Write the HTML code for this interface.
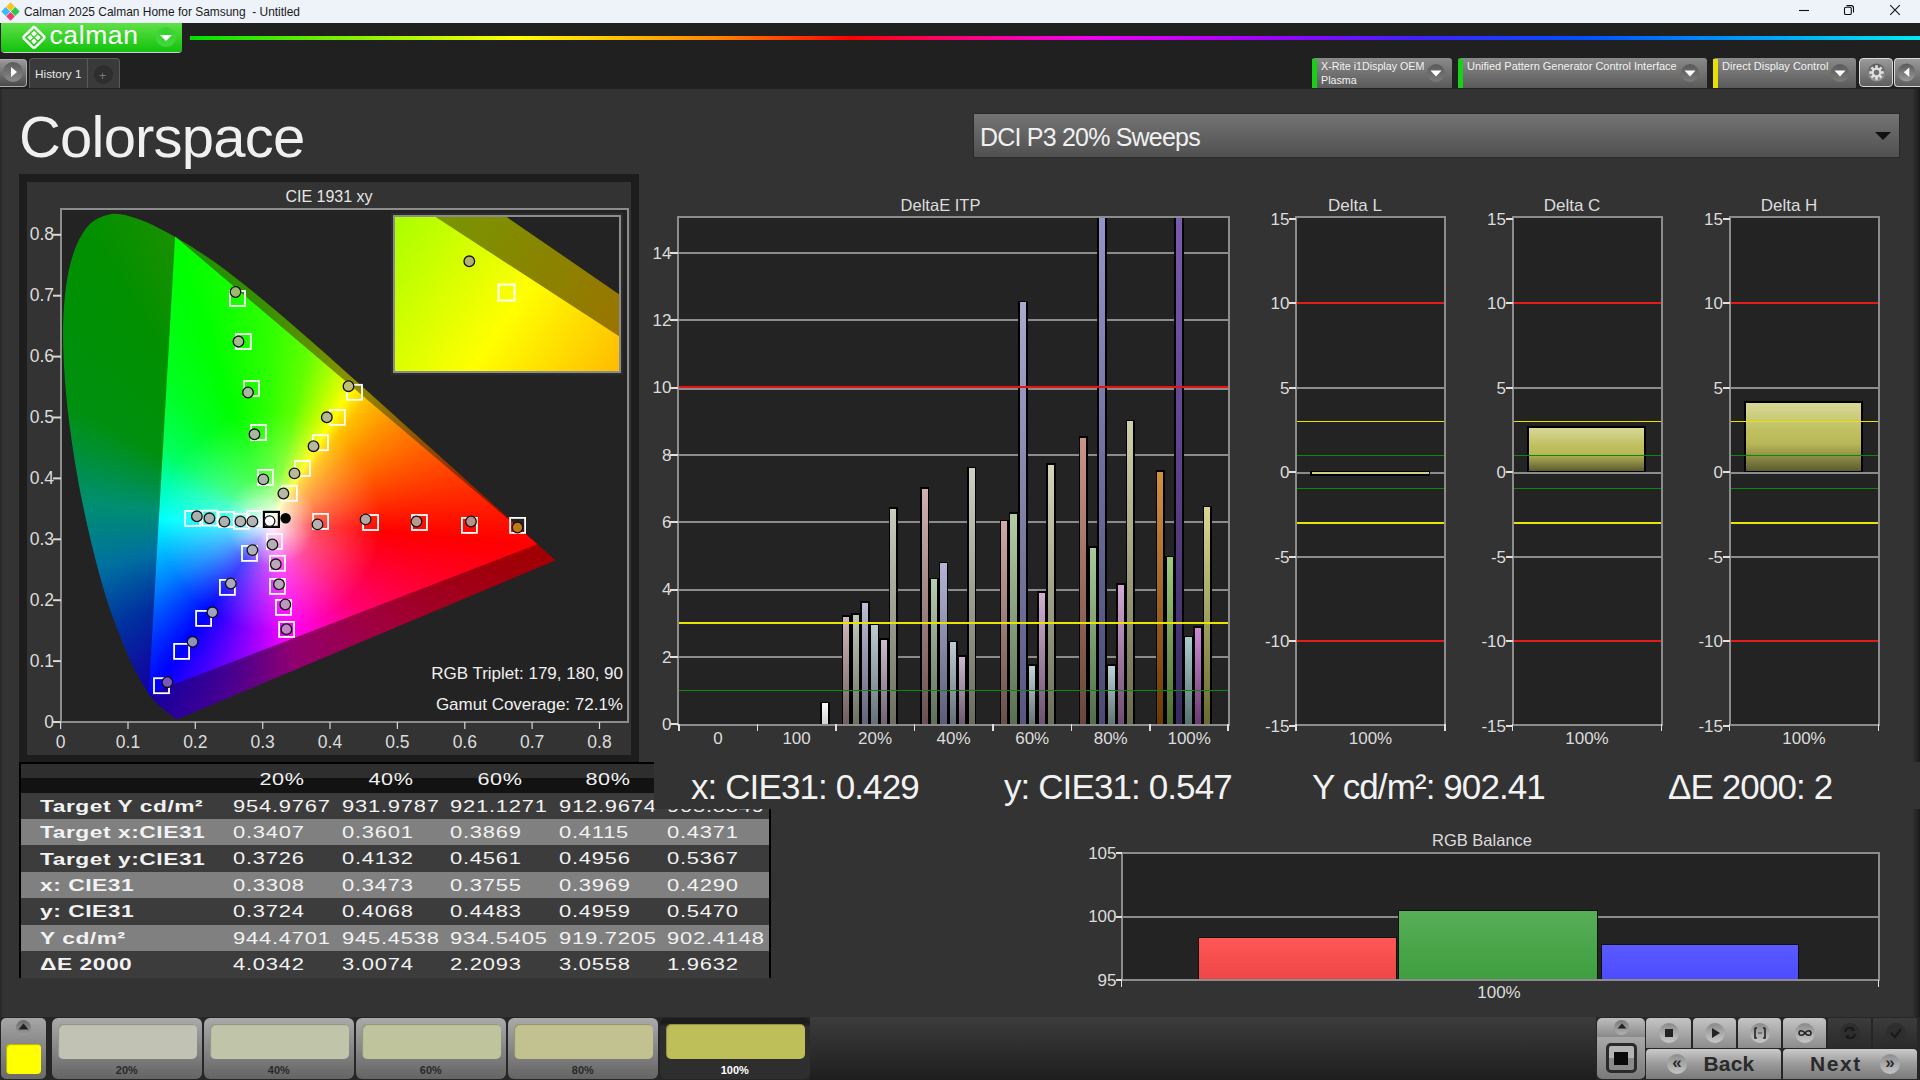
<!DOCTYPE html>
<html><head><meta charset="utf-8"><title>Calman</title>
<style>
html,body{margin:0;padding:0;width:1920px;height:1080px;overflow:hidden;background:#333;font-family:"Liberation Sans", sans-serif;}
.a{position:absolute;}
.t{position:absolute;white-space:nowrap;line-height:1;}
.lab{font-size:17px;font-weight:bold;color:#f2f2f2;letter-spacing:0.4px;transform:scaleX(1.34);transform-origin:0 0;}
.val{font-size:17px;color:#f2f2f2;letter-spacing:0.6px;transform:scaleX(1.29);transform-origin:0 0;}
.ro{font-size:35px;letter-spacing:-0.9px;color:#f2f2f2;}
.hdr{font-size:16.5px;color:#f2f2f2;letter-spacing:0.5px;transform:scaleX(1.31);}
</style></head><body>
<div class="a" style="left:0;top:0;width:1920px;height:23px;background:#eef2f9;"></div>
<svg class="a" style="left:1px;top:2px" width="19" height="19" viewBox="0 0 19 19">
 <g transform="rotate(45 9.5 9.5)">
 <rect x="3" y="3" width="6.2" height="6.2" fill="#f9c518"/>
 <rect x="9.8" y="3" width="6.2" height="6.2" fill="#2cc84a"/>
 <rect x="3" y="9.8" width="6.2" height="6.2" fill="#3db8f5"/>
 <rect x="9.8" y="9.8" width="6.2" height="6.2" fill="#ee3a6e"/>
 </g>
</svg>
<div class="t" style="left:24px;top:6.5px;font-size:11.95px;color:#1a1a1a;">Calman 2025 Calman Home for Samsung&nbsp; - Untitled</div>
<svg class="a" style="left:1780px;top:0px" width="140" height="23" viewBox="0 0 140 23">
<path d="M19 10.5H29" stroke="#111" stroke-width="1.1"/>
<rect x="64.5" y="7.2" width="6.8" height="7.3" rx="1.3" fill="none" stroke="#111" stroke-width="1.1"/>
<path d="M66.5 5.6H71.4Q73.5 5.6 73.5 7.7V12.4" fill="none" stroke="#111" stroke-width="1.1"/>
<path d="M110.2 5.2L119.8 14.8M119.8 5.2L110.2 14.8" stroke="#111" stroke-width="1.1"/>
</svg>
<div class="a" style="left:0;top:23px;width:1920px;height:66px;background:#202020;"></div>
<div class="a" style="left:1px;top:23px;width:181px;height:29px;border-radius:0 0 4px 4px;background:linear-gradient(#5fe048,#12c20c);box-shadow:0 1px 0 #cfcfcf;"></div>
<svg class="a" style="left:21px;top:24px" width="26" height="27" viewBox="0 0 26 27">
 <g transform="rotate(45 13 13.5)">
 <rect x="5.2" y="5.7" width="15.6" height="15.6" rx="1.5" fill="none" stroke="#fff" stroke-width="2.4"/>
 <rect x="8.3" y="8.8" width="4" height="4" fill="#fff"/><rect x="13.7" y="8.8" width="4" height="4" fill="#fff"/>
 <rect x="8.3" y="14.2" width="4" height="4" fill="#fff"/><rect x="13.7" y="14.2" width="4" height="4" fill="#fff"/>
 </g>
</svg>
<div class="t" style="left:49.5px;top:21.8px;font-size:26.5px;color:#fff;letter-spacing:0.6px;">calman</div>
<div class="a" style="left:156px;top:27px;width:20px;height:20px;border-radius:50%;background:radial-gradient(circle at 50% 35%,#2fd22a,#4ed945);"></div>
<svg class="a" style="left:159px;top:34px" width="14" height="8"><path d="M1 1H13L7 7Z" fill="#fff"/></svg>
<div class="a" style="left:190px;top:36px;width:1730px;height:4px;background:linear-gradient(90deg,#00e000 0%,#80f000 9%,#ffff00 18.8%,#ff8000 30.8%,#ff0000 38.2%,#ff0070 44%,#f000f0 52%,#a000ff 62%,#4020ff 71%,#0050ff 80.6%,#00e8f0 100%);"></div>
<div class="a" style="left:0;top:59px;width:26px;height:26px;border-radius:0 4px 4px 0;background:linear-gradient(#9a9a9a,#4a4a4a);border:1px solid #aaa;border-left:none;"></div>
<div class="a" style="left:3px;top:62px;width:20px;height:20px;border-radius:50%;background:linear-gradient(#5a5a5a,#8a8a8a);"></div>
<svg class="a" style="left:10px;top:66px" width="8" height="12"><path d="M1 1L7 6L1 11Z" fill="#fff"/></svg>
<div class="a" style="left:29px;top:58px;width:91px;height:30px;border-radius:4px 4px 0 0;background:#3a3a3a;border:1px solid #5a5a5a;border-bottom:none;box-sizing:border-box;"></div>
<div class="a" style="left:87px;top:59px;width:1px;height:29px;background:#5a5a5a;"></div>
<div class="t" style="left:35px;top:68.5px;font-size:11.8px;color:#e6e6e6;">History 1</div>
<div class="a" style="left:94px;top:65px;width:19px;height:19px;border-radius:50%;background:#2e2e2e;"></div>
<div class="t" style="left:99px;top:70px;font-size:12px;color:#7a7a7a;">+</div>
<div class="a" style="left:1312px;top:58px;width:140px;height:30px;border-radius:3px 3px 0 0;background:linear-gradient(#8a8a8a,#5a5a5a);"></div><div class="a" style="left:1312px;top:59px;width:5px;height:29px;background:#18d018;"></div><div class="t" style="left:1321px;top:59px;font-size:10.7px;line-height:14px;color:#f2f2f2;">X-Rite i1Display OEM<br>Plasma</div><div class="a" style="left:1427px;top:64px;width:18px;height:18px;border-radius:50%;background:linear-gradient(#5a5a5a,#7a7a7a);"></div><svg class="a" style="left:1430px;top:70px" width="12" height="7"><path d="M0.5 0.5H11.5L6 6.5Z" fill="#fff"/></svg><div class="a" style="left:1458px;top:58px;width:249px;height:30px;border-radius:3px 3px 0 0;background:linear-gradient(#8a8a8a,#5a5a5a);"></div><div class="a" style="left:1458px;top:59px;width:5px;height:29px;background:#18d018;"></div><div class="t" style="left:1467px;top:60.5px;font-size:11px;color:#f2f2f2;">Unified Pattern Generator Control Interface</div><div class="a" style="left:1681px;top:64px;width:18px;height:18px;border-radius:50%;background:linear-gradient(#5a5a5a,#7a7a7a);"></div><svg class="a" style="left:1684px;top:70px" width="12" height="7"><path d="M0.5 0.5H11.5L6 6.5Z" fill="#fff"/></svg><div class="a" style="left:1713px;top:58px;width:143px;height:30px;border-radius:3px 3px 0 0;background:linear-gradient(#8a8a8a,#5a5a5a);"></div><div class="a" style="left:1713px;top:59px;width:5px;height:29px;background:#e8e000;"></div><div class="t" style="left:1722px;top:60.5px;font-size:11px;color:#f2f2f2;">Direct Display Control</div><div class="a" style="left:1831px;top:64px;width:18px;height:18px;border-radius:50%;background:linear-gradient(#5a5a5a,#7a7a7a);"></div><svg class="a" style="left:1834px;top:70px" width="12" height="7"><path d="M0.5 0.5H11.5L6 6.5Z" fill="#fff"/></svg><div class="a" style="left:1859px;top:58px;width:34px;height:29px;border-radius:4px;background:linear-gradient(#9a9a9a,#5e5e5e);border:1.5px solid #d8d8d8;box-sizing:border-box;"></div>
<svg class="a" style="left:1866.5px;top:62.5px" width="19" height="19" viewBox="0 0 19 19"><defs><linearGradient id="gcb" x1="0" y1="0" x2="0" y2="1"><stop offset="0" stop-color="#5a5a5a"/><stop offset="1" stop-color="#9a9a9a"/></linearGradient></defs><circle cx="9.5" cy="9.5" r="9" fill="url(#gcb)"/><g fill="#e0e0e0"><rect x="8.20" y="2.30" width="2.6" height="3.2" transform="rotate(0 9.50 3.90)"/><rect x="12.16" y="3.94" width="2.6" height="3.2" transform="rotate(45 13.46 5.54)"/><rect x="13.80" y="7.90" width="2.6" height="3.2" transform="rotate(90 15.10 9.50)"/><rect x="12.16" y="11.86" width="2.6" height="3.2" transform="rotate(135 13.46 13.46)"/><rect x="8.20" y="13.50" width="2.6" height="3.2" transform="rotate(180 9.50 15.10)"/><rect x="4.24" y="11.86" width="2.6" height="3.2" transform="rotate(225 5.54 13.46)"/><rect x="2.60" y="7.90" width="2.6" height="3.2" transform="rotate(270 3.90 9.50)"/><rect x="4.24" y="3.94" width="2.6" height="3.2" transform="rotate(315 5.54 5.54)"/><circle cx="9.5" cy="9.5" r="4.8"/></g><circle cx="9.5" cy="9.5" r="2.7" fill="#707070"/></svg>
<div class="a" style="left:1893.5px;top:58px;width:27px;height:29px;border-radius:4px 0 0 4px;background:linear-gradient(#9a9a9a,#5e5e5e);border:1.5px solid #d8d8d8;border-right:none;box-sizing:border-box;"></div>
<svg class="a" style="left:1897px;top:62.5px" width="19" height="19" viewBox="0 0 19 19"><circle cx="9.5" cy="9.5" r="9" fill="url(#gcb)"/><path d="M12.3 4.5V14.1L6.8 9.3Z" fill="#fff"/></svg>
<div class="a" style="left:0;top:89px;width:1920px;height:928px;background:#333333;"></div><div class="a" style="left:0;top:89px;width:2px;height:929px;background:#2a2a2a;"></div><div class="a" style="left:1912px;top:89px;width:8px;height:929px;background:linear-gradient(90deg,rgba(20,20,20,0),#1a1a1a);"></div><div class="t" style="left:19px;top:108px;font-size:58px;letter-spacing:-0.8px;color:#f0f0f0;">Colorspace</div><div class="a" style="left:972.5px;top:113px;width:927.5px;height:45px;background:linear-gradient(#747474,#505050);border:1px solid #2a2a2a;box-sizing:border-box;"></div>
<div class="t" style="left:980px;top:125px;font-size:25px;letter-spacing:-0.8px;color:#f0f0f0;">DCI P3 20% Sweeps</div>
<svg class="a" style="left:1874px;top:131px" width="18" height="10"><path d="M1 1H17L9 9Z" fill="#111"/></svg>
<div class="a" style="left:19px;top:174px;width:620px;height:588px;background:#1d1d1d;"></div><div class="a" style="left:27px;top:182px;width:604px;height:573px;background:#333333;"></div><div class="t" style="left:229px;top:189px;width:200px;text-align:center;font-size:16px;color:#e6e6e6;">CIE 1931 xy</div><div class="a" style="left:60px;top:208px;width:569px;height:515px;background:#232323;box-sizing:border-box;border:2px solid #8c8c8c;"></div><div class="a" style="left:0;top:0;width:700px;height:760px;background:conic-gradient(from 0deg at 271.2px 521.6px,#3c9000 0deg,#909000 31deg,#904e00 63deg,#a00000 95deg,#a00040 135deg,#900070 171deg,#4a0090 194deg,#1400a0 215deg,#0030a0 235deg,#0070a0 255deg,#008f70 276deg,#009010 300deg,#009000 327deg,#3c9000 360deg);clip-path:path('M177.9 719.0 C177.8 719.0 177.5 719.1 177.3 719.1 C177.2 719.1 177.1 719.1 176.9 719.1 C176.7 719.0 176.3 719.0 176.1 718.9 C175.8 718.8 175.6 718.7 175.3 718.5 C175.0 718.3 174.8 718.1 174.4 717.8 C174.0 717.5 173.5 717.2 173.0 716.8 C172.5 716.4 172.0 715.9 171.3 715.4 C170.7 714.8 170.0 714.3 169.1 713.6 C168.2 712.9 167.2 712.1 166.1 711.2 C165.0 710.3 163.7 709.4 162.3 708.2 C160.9 707.0 159.3 705.7 157.6 703.9 C155.9 702.2 154.1 700.6 151.9 697.7 C149.6 694.8 147.1 691.6 144.2 686.8 C141.3 682.0 138.1 676.7 134.4 669.1 C130.7 661.5 126.7 652.7 122.1 641.2 C117.5 629.6 112.0 616.2 106.9 599.8 C101.7 583.3 96.3 563.9 91.2 542.3 C86.1 520.8 80.6 495.4 76.4 470.7 C72.3 446.0 68.3 418.7 66.1 394.1 C63.9 369.5 62.6 344.7 63.2 323.2 C63.9 301.7 66.0 281.1 70.0 265.1 C73.9 249.2 80.0 236.0 86.8 227.5 C93.6 219.0 102.2 215.7 110.6 214.2 C119.1 212.8 128.5 216.0 137.5 218.8 C146.6 221.7 156.0 226.7 164.8 231.2 C173.6 235.7 182.1 240.8 190.5 246.0 C198.9 251.2 207.1 256.8 215.3 262.6 C223.4 268.4 231.6 274.6 239.6 280.9 C247.7 287.2 255.7 293.8 263.8 300.4 C271.8 307.0 279.8 313.8 287.8 320.7 C295.8 327.6 303.9 334.6 311.9 341.7 C319.9 348.7 327.9 355.8 335.9 362.9 C343.9 370.0 351.9 377.1 359.7 384.2 C367.6 391.2 375.4 398.3 383.1 405.2 C390.8 412.1 398.4 419.0 405.8 425.7 C413.2 432.3 420.5 438.9 427.6 445.3 C434.6 451.6 441.5 457.8 448.1 463.7 C454.6 469.5 460.9 475.3 466.7 480.5 C472.5 485.8 477.9 490.6 482.9 495.1 C488.0 499.7 492.9 504.1 497.2 508.0 C501.6 511.9 504.2 514.2 509.1 518.6 C513.9 523.0 521.7 530.0 526.4 534.2 C531.1 538.5 534.4 541.4 537.4 544.2 C540.5 547.0 542.9 549.1 544.9 550.9 C547.0 552.8 548.4 554.0 549.6 555.1 C550.9 556.2 551.5 556.8 552.3 557.6 C553.2 558.3 554.1 559.2 554.6 559.6 C555.1 560.1 555.3 560.3 555.5 560.4Z');"></div><div class="a" style="left:0;top:0;width:700px;height:760px;background:radial-gradient(circle at 271.2px 521.6px,rgba(255,255,255,1) 0px,rgba(255,255,255,0.85) 12px,rgba(255,255,255,0.3) 45px,rgba(255,255,255,0) 110px),conic-gradient(from 0deg at 271.2px 521.6px,#30ff00 0deg,#60ff00 12deg,#b0ff00 22deg,#ffff00 31deg,#ffc000 38deg,#ff9000 50deg,#ff6000 65deg,#ff3000 80deg,#ff0000 95deg,#ff0070 135deg,#ff00ff 171deg,#8000ff 194deg,#0000ff 215deg,#0080ff 240deg,#00ffff 271deg,#00ffb0 290deg,#00ff60 304deg,#00ff20 325deg,#00ff00 341deg,#30ff00 360deg);clip-path:polygon(175.1px 236.6px ,537.5px 544.2px ,148.8px 694.0px);"></div><svg class="a" style="left:0;top:0" width="700" height="780"><line x1="60.6" y1="722" x2="60.6" y2="729" stroke="#d8d8d8" stroke-width="1.2"/><line x1="128.0" y1="722" x2="128.0" y2="729" stroke="#d8d8d8" stroke-width="1.2"/><line x1="195.3" y1="722" x2="195.3" y2="729" stroke="#d8d8d8" stroke-width="1.2"/><line x1="262.7" y1="722" x2="262.7" y2="729" stroke="#d8d8d8" stroke-width="1.2"/><line x1="330.0" y1="722" x2="330.0" y2="729" stroke="#d8d8d8" stroke-width="1.2"/><line x1="397.4" y1="722" x2="397.4" y2="729" stroke="#d8d8d8" stroke-width="1.2"/><line x1="464.8" y1="722" x2="464.8" y2="729" stroke="#d8d8d8" stroke-width="1.2"/><line x1="532.1" y1="722" x2="532.1" y2="729" stroke="#d8d8d8" stroke-width="1.2"/><line x1="599.5" y1="722" x2="599.5" y2="729" stroke="#d8d8d8" stroke-width="1.2"/><line x1="53" y1="722.0" x2="61" y2="722.0" stroke="#d8d8d8" stroke-width="2"/><line x1="53" y1="661.1" x2="61" y2="661.1" stroke="#d8d8d8" stroke-width="2"/><line x1="53" y1="600.2" x2="61" y2="600.2" stroke="#d8d8d8" stroke-width="2"/><line x1="53" y1="539.3" x2="61" y2="539.3" stroke="#d8d8d8" stroke-width="2"/><line x1="53" y1="478.4" x2="61" y2="478.4" stroke="#d8d8d8" stroke-width="2"/><line x1="53" y1="417.5" x2="61" y2="417.5" stroke="#d8d8d8" stroke-width="2"/><line x1="53" y1="356.6" x2="61" y2="356.6" stroke="#d8d8d8" stroke-width="2"/><line x1="53" y1="295.7" x2="61" y2="295.7" stroke="#d8d8d8" stroke-width="2"/><line x1="53" y1="234.8" x2="61" y2="234.8" stroke="#d8d8d8" stroke-width="2"/></svg><div class="t" style="left:30.6px;top:733.5px;width:60px;text-align:center;font-size:17.5px;color:#dcdcdc;">0</div><div class="t" style="left:98.0px;top:733.5px;width:60px;text-align:center;font-size:17.5px;color:#dcdcdc;">0.1</div><div class="t" style="left:165.3px;top:733.5px;width:60px;text-align:center;font-size:17.5px;color:#dcdcdc;">0.2</div><div class="t" style="left:232.7px;top:733.5px;width:60px;text-align:center;font-size:17.5px;color:#dcdcdc;">0.3</div><div class="t" style="left:300.0px;top:733.5px;width:60px;text-align:center;font-size:17.5px;color:#dcdcdc;">0.4</div><div class="t" style="left:367.4px;top:733.5px;width:60px;text-align:center;font-size:17.5px;color:#dcdcdc;">0.5</div><div class="t" style="left:434.8px;top:733.5px;width:60px;text-align:center;font-size:17.5px;color:#dcdcdc;">0.6</div><div class="t" style="left:502.1px;top:733.5px;width:60px;text-align:center;font-size:17.5px;color:#dcdcdc;">0.7</div><div class="t" style="left:569.5px;top:733.5px;width:60px;text-align:center;font-size:17.5px;color:#dcdcdc;">0.8</div><div class="t" style="left:0px;top:713.5px;width:54px;text-align:right;font-size:17.5px;color:#dcdcdc;">0</div><div class="t" style="left:0px;top:652.6px;width:54px;text-align:right;font-size:17.5px;color:#dcdcdc;">0.1</div><div class="t" style="left:0px;top:591.7px;width:54px;text-align:right;font-size:17.5px;color:#dcdcdc;">0.2</div><div class="t" style="left:0px;top:530.8px;width:54px;text-align:right;font-size:17.5px;color:#dcdcdc;">0.3</div><div class="t" style="left:0px;top:469.9px;width:54px;text-align:right;font-size:17.5px;color:#dcdcdc;">0.4</div><div class="t" style="left:0px;top:409.0px;width:54px;text-align:right;font-size:17.5px;color:#dcdcdc;">0.5</div><div class="t" style="left:0px;top:348.1px;width:54px;text-align:right;font-size:17.5px;color:#dcdcdc;">0.6</div><div class="t" style="left:0px;top:287.2px;width:54px;text-align:right;font-size:17.5px;color:#dcdcdc;">0.7</div><div class="t" style="left:0px;top:226.3px;width:54px;text-align:right;font-size:17.5px;color:#dcdcdc;">0.8</div><div class="a" style="left:391px;top:213px;width:232px;height:162px;background:#2c2c2c;"></div><div class="a" style="left:393px;top:215px;width:228px;height:158px;background:#8c8c8c;"></div><svg class="a" style="left:395px;top:217px" width="224" height="154" viewBox="395 217 224 154">
<defs><linearGradient id="ig" x1="395" y1="217" x2="619" y2="371" gradientUnits="userSpaceOnUse"><stop offset="0" stop-color="#a8ff00"/><stop offset="0.3" stop-color="#d8ff00"/><stop offset="0.55" stop-color="#ffff00"/><stop offset="1" stop-color="#ffbb00"/></linearGradient>
<linearGradient id="ig2" x1="450" y1="217" x2="619" y2="336" gradientUnits="userSpaceOnUse"><stop offset="0" stop-color="#7a9400"/><stop offset="1" stop-color="#9a7400"/></linearGradient></defs>
<rect x="395" y="217" width="224" height="154" fill="url(#ig)"/>
<polygon points="435.6,217 619,217 619,336.3" fill="url(#ig2)"/>
<polygon points="506.7,217 619,217 619,294.2" fill="#232323"/>
<circle cx="469.3" cy="261.3" r="5.3" fill="#b4b070" stroke="#111" stroke-width="1.3"/>
<rect x="498.5" y="284.5" width="16" height="16" fill="none" stroke="#fff" stroke-width="2"/>
</svg><svg class="a" style="left:0;top:0" width="700" height="760"><rect x="230.0" y="291.0" width="15" height="15" fill="none" stroke="#fff" stroke-width="1.8"/><rect x="235.8" y="334.0" width="15" height="15" fill="none" stroke="#fff" stroke-width="1.8"/><rect x="244.0" y="381.0" width="15" height="15" fill="none" stroke="#fff" stroke-width="1.8"/><rect x="251.0" y="425.0" width="15" height="15" fill="none" stroke="#fff" stroke-width="1.8"/><rect x="312.9" y="435.2" width="15" height="15" fill="none" stroke="#fff" stroke-width="1.8"/><rect x="329.8" y="409.9" width="15" height="15" fill="none" stroke="#fff" stroke-width="1.8"/><rect x="347.0" y="384.8" width="15" height="15" fill="none" stroke="#fff" stroke-width="1.8"/><rect x="258.0" y="469.9" width="15" height="15" fill="none" stroke="#fff" stroke-width="1.8"/><rect x="281.9" y="485.8" width="15" height="15" fill="none" stroke="#fff" stroke-width="1.8"/><rect x="294.9" y="461.0" width="15" height="15" fill="none" stroke="#fff" stroke-width="1.8"/><rect x="185.2" y="510.9" width="15" height="15" fill="none" stroke="#fff" stroke-width="1.8"/><rect x="202.3" y="510.6" width="15" height="15" fill="none" stroke="#fff" stroke-width="1.8"/><rect x="218.9" y="511.9" width="15" height="15" fill="none" stroke="#fff" stroke-width="1.8"/><rect x="233.9" y="513.8" width="15" height="15" fill="none" stroke="#fff" stroke-width="1.8"/><rect x="247.1" y="510.9" width="15" height="15" fill="none" stroke="#fff" stroke-width="1.8"/><rect x="313.1" y="513.9" width="15" height="15" fill="none" stroke="#fff" stroke-width="1.8"/><rect x="363.1" y="515.0" width="15" height="15" fill="none" stroke="#fff" stroke-width="1.8"/><rect x="411.9" y="515.0" width="15" height="15" fill="none" stroke="#fff" stroke-width="1.8"/><rect x="461.9" y="517.9" width="15" height="15" fill="none" stroke="#fff" stroke-width="1.8"/><rect x="510.1" y="517.9" width="15" height="15" fill="none" stroke="#fff" stroke-width="1.8"/><rect x="266.9" y="533.9" width="15" height="15" fill="none" stroke="#fff" stroke-width="1.8"/><rect x="270.0" y="555.8" width="15" height="15" fill="none" stroke="#fff" stroke-width="1.8"/><rect x="270.0" y="578.9" width="15" height="15" fill="none" stroke="#fff" stroke-width="1.8"/><rect x="276.0" y="599.9" width="15" height="15" fill="none" stroke="#fff" stroke-width="1.8"/><rect x="279.1" y="621.9" width="15" height="15" fill="none" stroke="#fff" stroke-width="1.8"/><rect x="242.0" y="545.9" width="15" height="15" fill="none" stroke="#fff" stroke-width="1.8"/><rect x="219.9" y="579.9" width="15" height="15" fill="none" stroke="#fff" stroke-width="1.8"/><rect x="196.1" y="610.9" width="15" height="15" fill="none" stroke="#fff" stroke-width="1.8"/><rect x="174.1" y="643.9" width="15" height="15" fill="none" stroke="#fff" stroke-width="1.8"/><rect x="154.0" y="678.2" width="15" height="15" fill="none" stroke="#fff" stroke-width="1.8"/><rect x="263.9" y="511.9" width="15" height="15" fill="none" stroke="#000" stroke-width="2.2"/><circle cx="235.5" cy="292" r="5.3" fill="#a0b870" stroke="#111" stroke-width="1.3"/><circle cx="238.5" cy="341.5" r="5.3" fill="#a8b890" stroke="#111" stroke-width="1.3"/><circle cx="248" cy="392.5" r="5.3" fill="#a8b89c" stroke="#111" stroke-width="1.3"/><circle cx="254.5" cy="434.3" r="5.3" fill="#a8b8a0" stroke="#111" stroke-width="1.3"/><circle cx="313.5" cy="446.2" r="5.3" fill="#b8b8a0" stroke="#111" stroke-width="1.3"/><circle cx="326.8" cy="417.3" r="5.3" fill="#b8b890" stroke="#111" stroke-width="1.3"/><circle cx="348.5" cy="386.2" r="5.3" fill="#c0c070" stroke="#111" stroke-width="1.3"/><circle cx="263.3" cy="479.4" r="5.3" fill="#b0b4a8" stroke="#111" stroke-width="1.3"/><circle cx="283.4" cy="493.5" r="5.3" fill="#b8b8a8" stroke="#111" stroke-width="1.3"/><circle cx="294.5" cy="473.4" r="5.3" fill="#b8b8a0" stroke="#111" stroke-width="1.3"/><circle cx="196.9" cy="516.3" r="5.3" fill="#a8b0b0" stroke="#111" stroke-width="1.3"/><circle cx="209.4" cy="518.3" r="5.3" fill="#acb0b0" stroke="#111" stroke-width="1.3"/><circle cx="224.4" cy="521.6" r="5.3" fill="#b0b0b0" stroke="#111" stroke-width="1.3"/><circle cx="240.4" cy="521.4" r="5.3" fill="#b4b4b4" stroke="#111" stroke-width="1.3"/><circle cx="252.4" cy="521.4" r="5.3" fill="#b4b4b4" stroke="#111" stroke-width="1.3"/><circle cx="317.5" cy="524.4" r="5.3" fill="#b8b0b0" stroke="#111" stroke-width="1.3"/><circle cx="365.6" cy="519.4" r="5.3" fill="#b8a4a0" stroke="#111" stroke-width="1.3"/><circle cx="416.5" cy="521.5" r="5.3" fill="#b89890" stroke="#111" stroke-width="1.3"/><circle cx="471" cy="521.5" r="5.3" fill="#b89088" stroke="#111" stroke-width="1.3"/><circle cx="517.5" cy="527.5" r="5.3" fill="#c07810" stroke="#111" stroke-width="1.3"/><circle cx="272.4" cy="544.5" r="5.3" fill="#b4b0b4" stroke="#111" stroke-width="1.3"/><circle cx="275.8" cy="564.3" r="5.3" fill="#b8a8b8" stroke="#111" stroke-width="1.3"/><circle cx="279" cy="584.3" r="5.3" fill="#b8a8bc" stroke="#111" stroke-width="1.3"/><circle cx="285.3" cy="604.5" r="5.3" fill="#bc98c0" stroke="#111" stroke-width="1.3"/><circle cx="286.4" cy="629.2" r="5.3" fill="#c088c8" stroke="#111" stroke-width="1.3"/><circle cx="252.4" cy="550.1" r="5.3" fill="#b0b0b8" stroke="#111" stroke-width="1.3"/><circle cx="230.8" cy="583.5" r="5.3" fill="#a8a8c0" stroke="#111" stroke-width="1.3"/><circle cx="212.4" cy="612.3" r="5.3" fill="#a0a0c4" stroke="#111" stroke-width="1.3"/><circle cx="192.6" cy="641.8" r="5.3" fill="#9090c0" stroke="#111" stroke-width="1.3"/><circle cx="167.4" cy="682.2" r="5.3" fill="#7858b8" stroke="#111" stroke-width="1.3"/><circle cx="269.6" cy="521.1" r="5.3" fill="#fff" stroke="#111" stroke-width="1.3"/><circle cx="285.6" cy="518.3" r="5.2" fill="#000"/></svg><div class="t" style="left:323px;top:665px;width:300px;text-align:right;font-size:17px;color:#f0f0f0;">RGB Triplet: 179, 180, 90</div><div class="t" style="left:323px;top:696px;width:300px;text-align:right;font-size:17px;color:#f0f0f0;">Gamut Coverage: 72.1%</div><div class="a" style="left:19px;top:762px;width:752px;height:216px;background:#000;"></div><div class="a" style="left:21px;top:764px;width:633px;height:14px;background:#2e2e2e;"></div><div class="a" style="left:21px;top:778px;width:633px;height:15px;background:#121212;"></div><div class="a" style="left:21px;top:792.50px;width:748px;height:26.63px;background:#3c3c3c;"></div><div class="t lab" style="left:40px;top:797.70px;">Target Y cd/m&sup2;</div><div class="t val" style="left:232.5px;top:797.50px;">954.9767</div><div class="t val" style="left:341.5px;top:797.50px;">931.9787</div><div class="t val" style="left:450px;top:797.50px;">921.1271</div><div class="t val" style="left:558.5px;top:797.50px;">912.9674</div><div class="t val" style="left:667px;top:797.50px;">905.8849</div><div class="a" style="left:21px;top:818.93px;width:748px;height:26.63px;background:#808080;"></div><div class="t lab" style="left:40px;top:824.13px;">Target x:CIE31</div><div class="t val" style="left:232.5px;top:823.93px;">0.3407</div><div class="t val" style="left:341.5px;top:823.93px;">0.3601</div><div class="t val" style="left:450px;top:823.93px;">0.3869</div><div class="t val" style="left:558.5px;top:823.93px;">0.4115</div><div class="t val" style="left:667px;top:823.93px;">0.4371</div><div class="a" style="left:21px;top:845.36px;width:748px;height:26.63px;background:#3c3c3c;"></div><div class="t lab" style="left:40px;top:850.56px;">Target y:CIE31</div><div class="t val" style="left:232.5px;top:850.36px;">0.3726</div><div class="t val" style="left:341.5px;top:850.36px;">0.4132</div><div class="t val" style="left:450px;top:850.36px;">0.4561</div><div class="t val" style="left:558.5px;top:850.36px;">0.4956</div><div class="t val" style="left:667px;top:850.36px;">0.5367</div><div class="a" style="left:21px;top:871.79px;width:748px;height:26.63px;background:#808080;"></div><div class="t lab" style="left:40px;top:876.99px;">x: CIE31</div><div class="t val" style="left:232.5px;top:876.79px;">0.3308</div><div class="t val" style="left:341.5px;top:876.79px;">0.3473</div><div class="t val" style="left:450px;top:876.79px;">0.3755</div><div class="t val" style="left:558.5px;top:876.79px;">0.3969</div><div class="t val" style="left:667px;top:876.79px;">0.4290</div><div class="a" style="left:21px;top:898.22px;width:748px;height:26.63px;background:#3c3c3c;"></div><div class="t lab" style="left:40px;top:903.42px;">y: CIE31</div><div class="t val" style="left:232.5px;top:903.22px;">0.3724</div><div class="t val" style="left:341.5px;top:903.22px;">0.4068</div><div class="t val" style="left:450px;top:903.22px;">0.4483</div><div class="t val" style="left:558.5px;top:903.22px;">0.4959</div><div class="t val" style="left:667px;top:903.22px;">0.5470</div><div class="a" style="left:21px;top:924.65px;width:748px;height:26.63px;background:#808080;"></div><div class="t lab" style="left:40px;top:929.85px;">Y cd/m&sup2;</div><div class="t val" style="left:232.5px;top:929.65px;">944.4701</div><div class="t val" style="left:341.5px;top:929.65px;">945.4538</div><div class="t val" style="left:450px;top:929.65px;">934.5405</div><div class="t val" style="left:558.5px;top:929.65px;">919.7205</div><div class="t val" style="left:667px;top:929.65px;">902.4148</div><div class="a" style="left:21px;top:951.08px;width:748px;height:26.63px;background:#3c3c3c;"></div><div class="t lab" style="left:40px;top:956.28px;">&Delta;E 2000</div><div class="t val" style="left:232.5px;top:956.08px;">4.0342</div><div class="t val" style="left:341.5px;top:956.08px;">3.0074</div><div class="t val" style="left:450px;top:956.08px;">2.2093</div><div class="t val" style="left:558.5px;top:956.08px;">3.0558</div><div class="t val" style="left:667px;top:956.08px;">1.9632</div><div class="t hdr" style="left:241.5px;top:770.5px;width:80px;text-align:center;">20%</div><div class="t hdr" style="left:350.5px;top:770.5px;width:80px;text-align:center;">40%</div><div class="t hdr" style="left:459.5px;top:770.5px;width:80px;text-align:center;">60%</div><div class="t hdr" style="left:567.5px;top:770.5px;width:80px;text-align:center;">80%</div><div class="a" style="left:678.0px;top:217.0px;width:551.0px;height:507.5px;background:#232323;"></div><div class="a" style="left:678.0px;top:655.9px;width:551.0px;height:2px;background:#8c8c8c;"></div><div class="a" style="left:678.0px;top:588.5px;width:551.0px;height:2px;background:#8c8c8c;"></div><div class="a" style="left:678.0px;top:521.2px;width:551.0px;height:2px;background:#8c8c8c;"></div><div class="a" style="left:678.0px;top:453.8px;width:551.0px;height:2px;background:#8c8c8c;"></div><div class="a" style="left:678.0px;top:319.2px;width:551.0px;height:2px;background:#8c8c8c;"></div><div class="a" style="left:678.0px;top:251.8px;width:551.0px;height:2px;background:#8c8c8c;"></div><div class="a" style="left:678.0px;top:388.0px;width:551.0px;height:2px;background:#8c8c8c;"></div><div class="a" style="left:820.40px;top:701.7px;width:9.4px;height:22.8px;background:#000;"></div><div class="a" style="left:822.00px;top:703.3px;width:6.20px;height:21.2px;background:linear-gradient(#fafafa,#d0d0d0);"></div><div class="a" style="left:841.60px;top:614.9px;width:9.4px;height:109.6px;background:#000;"></div><div class="a" style="left:843.20px;top:616.5px;width:6.20px;height:108.0px;background:linear-gradient(#d0b8b8,#6e5e5e);"></div><div class="a" style="left:850.98px;top:613.2px;width:9.4px;height:111.3px;background:#000;"></div><div class="a" style="left:852.58px;top:614.8px;width:6.20px;height:109.7px;background:linear-gradient(#c0c8b8,#6a7064);"></div><div class="a" style="left:860.36px;top:601.4px;width:9.4px;height:123.1px;background:#000;"></div><div class="a" style="left:861.96px;top:603.0px;width:6.20px;height:121.5px;background:linear-gradient(#bcbcd4,#62627a);"></div><div class="a" style="left:869.74px;top:623.3px;width:9.4px;height:101.2px;background:#000;"></div><div class="a" style="left:871.34px;top:624.9px;width:6.20px;height:99.6px;background:linear-gradient(#c0ccd0,#66707a);"></div><div class="a" style="left:879.12px;top:638.4px;width:9.4px;height:86.1px;background:#000;"></div><div class="a" style="left:880.72px;top:640.0px;width:6.20px;height:84.5px;background:linear-gradient(#ccbccc,#706070);"></div><div class="a" style="left:888.50px;top:507.1px;width:9.4px;height:217.4px;background:#000;"></div><div class="a" style="left:890.10px;top:508.7px;width:6.20px;height:215.8px;background:linear-gradient(#ccccbc,#6e6e60);"></div><div class="a" style="left:920.10px;top:486.9px;width:9.4px;height:237.6px;background:#000;"></div><div class="a" style="left:921.70px;top:488.5px;width:6.20px;height:236.0px;background:linear-gradient(#d0b0b0,#6a5050);"></div><div class="a" style="left:929.48px;top:577.8px;width:9.4px;height:146.7px;background:#000;"></div><div class="a" style="left:931.08px;top:579.4px;width:6.20px;height:145.1px;background:linear-gradient(#b8ccb0,#5e6e58);"></div><div class="a" style="left:938.86px;top:561.7px;width:9.4px;height:162.8px;background:#000;"></div><div class="a" style="left:940.46px;top:563.3px;width:6.20px;height:161.2px;background:linear-gradient(#b4b4d4,#5c5c7a);"></div><div class="a" style="left:948.24px;top:640.8px;width:9.4px;height:83.7px;background:#000;"></div><div class="a" style="left:949.84px;top:642.4px;width:6.20px;height:82.1px;background:linear-gradient(#c0ccd4,#646e78);"></div><div class="a" style="left:957.62px;top:655.3px;width:9.4px;height:69.2px;background:#000;"></div><div class="a" style="left:959.22px;top:656.9px;width:6.20px;height:67.6px;background:linear-gradient(#ccb8d0,#6e5a70);"></div><div class="a" style="left:967.00px;top:466.7px;width:9.4px;height:257.8px;background:#000;"></div><div class="a" style="left:968.60px;top:468.3px;width:6.20px;height:256.2px;background:linear-gradient(#d0d0c0,#6c6c5c);"></div><div class="a" style="left:999.50px;top:519.6px;width:9.4px;height:204.9px;background:#000;"></div><div class="a" style="left:1001.10px;top:521.2px;width:6.20px;height:203.3px;background:linear-gradient(#d0aaa4,#6a4e4a);"></div><div class="a" style="left:1008.88px;top:512.2px;width:9.4px;height:212.3px;background:#000;"></div><div class="a" style="left:1010.48px;top:513.8px;width:6.20px;height:210.7px;background:linear-gradient(#b4cca4,#5a6e50);"></div><div class="a" style="left:1018.26px;top:300.7px;width:9.4px;height:423.8px;background:#000;"></div><div class="a" style="left:1019.86px;top:302.3px;width:6.20px;height:422.2px;background:linear-gradient(#a8a8d0,#565680);"></div><div class="a" style="left:1027.64px;top:664.0px;width:9.4px;height:60.5px;background:#000;"></div><div class="a" style="left:1029.24px;top:665.6px;width:6.20px;height:58.9px;background:linear-gradient(#c4d4d4,#667474);"></div><div class="a" style="left:1037.02px;top:591.3px;width:9.4px;height:133.2px;background:#000;"></div><div class="a" style="left:1038.62px;top:592.9px;width:6.20px;height:131.6px;background:linear-gradient(#d0b0d0,#6e5270);"></div><div class="a" style="left:1046.40px;top:463.3px;width:9.4px;height:261.2px;background:#000;"></div><div class="a" style="left:1048.00px;top:464.9px;width:6.20px;height:259.6px;background:linear-gradient(#d4d4b8,#6e6e58);"></div><div class="a" style="left:1078.60px;top:436.4px;width:9.4px;height:288.1px;background:#000;"></div><div class="a" style="left:1080.20px;top:438.0px;width:6.20px;height:286.5px;background:linear-gradient(#cc9488,#6a4438);"></div><div class="a" style="left:1087.98px;top:546.2px;width:9.4px;height:178.3px;background:#000;"></div><div class="a" style="left:1089.58px;top:547.8px;width:6.20px;height:176.7px;background:linear-gradient(#a8cc98,#506e48);"></div><div class="a" style="left:1097.36px;top:216.4px;width:9.4px;height:508.1px;background:#000;"></div><div class="a" style="left:1098.96px;top:218.0px;width:6.20px;height:506.5px;background:linear-gradient(#9494c8,#4a4a74);"></div><div class="a" style="left:1106.74px;top:664.0px;width:9.4px;height:60.5px;background:#000;"></div><div class="a" style="left:1108.34px;top:665.6px;width:6.20px;height:58.9px;background:linear-gradient(#bcd4d4,#607474);"></div><div class="a" style="left:1116.12px;top:582.9px;width:9.4px;height:141.6px;background:#000;"></div><div class="a" style="left:1117.72px;top:584.5px;width:6.20px;height:140.0px;background:linear-gradient(#d4a8d4,#6e4c70);"></div><div class="a" style="left:1125.50px;top:419.6px;width:9.4px;height:304.9px;background:#000;"></div><div class="a" style="left:1127.10px;top:421.2px;width:6.20px;height:303.3px;background:linear-gradient(#d0d0a8,#6a6a4c);"></div><div class="a" style="left:1155.60px;top:470.1px;width:9.4px;height:254.4px;background:#000;"></div><div class="a" style="left:1157.20px;top:471.7px;width:6.20px;height:252.8px;background:linear-gradient(#d49040,#6a3a00);"></div><div class="a" style="left:1164.98px;top:555.6px;width:9.4px;height:168.9px;background:#000;"></div><div class="a" style="left:1166.58px;top:557.2px;width:6.20px;height:167.3px;background:linear-gradient(#a0cc78,#4c6e30);"></div><div class="a" style="left:1174.36px;top:216.4px;width:9.4px;height:508.1px;background:#000;"></div><div class="a" style="left:1175.96px;top:218.0px;width:6.20px;height:506.5px;background:linear-gradient(#7a5ab0,#3a2a60);"></div><div class="a" style="left:1183.74px;top:635.7px;width:9.4px;height:88.8px;background:#000;"></div><div class="a" style="left:1185.34px;top:637.3px;width:6.20px;height:87.2px;background:linear-gradient(#a8cccc,#587070);"></div><div class="a" style="left:1193.12px;top:626.3px;width:9.4px;height:98.2px;background:#000;"></div><div class="a" style="left:1194.72px;top:627.9px;width:6.20px;height:96.6px;background:linear-gradient(#d08ad4,#6a3a70);"></div><div class="a" style="left:1202.50px;top:505.8px;width:9.4px;height:218.7px;background:#000;"></div><div class="a" style="left:1204.10px;top:507.4px;width:6.20px;height:217.1px;background:linear-gradient(#d8d890,#6a6a30);"></div><div class="a" style="left:678.0px;top:385.7px;width:551.0px;height:2px;background:#e81414;"></div><div class="a" style="left:678.0px;top:622.3px;width:551.0px;height:1.8px;background:#e8e400;"></div><div class="a" style="left:678.0px;top:689.6px;width:551.0px;height:1.8px;background:#0a8a0a;"></div><div class="a" style="left:677.0px;top:216.0px;width:553.0px;height:509.5px;box-sizing:border-box;border:2px solid #8c8c8c;"></div><div class="t" style="left:880.5px;top:196.9px;width:120px;text-align:center;font-size:16.5px;color:#dcdcdc;">DeltaE ITP</div><div class="a" style="left:670.0px;top:723.2px;width:8.0px;height:2px;background:#e0e0e0;"></div><div class="t" style="left:611.5px;top:715.9px;width:60px;text-align:right;font-size:17px;color:#dcdcdc;">0</div><div class="a" style="left:670.0px;top:655.9px;width:8.0px;height:2px;background:#e0e0e0;"></div><div class="t" style="left:611.5px;top:648.5px;width:60px;text-align:right;font-size:17px;color:#dcdcdc;">2</div><div class="a" style="left:670.0px;top:588.5px;width:8.0px;height:2px;background:#e0e0e0;"></div><div class="t" style="left:611.5px;top:581.2px;width:60px;text-align:right;font-size:17px;color:#dcdcdc;">4</div><div class="a" style="left:670.0px;top:521.2px;width:8.0px;height:2px;background:#e0e0e0;"></div><div class="t" style="left:611.5px;top:513.8px;width:60px;text-align:right;font-size:17px;color:#dcdcdc;">6</div><div class="a" style="left:670.0px;top:453.8px;width:8.0px;height:2px;background:#e0e0e0;"></div><div class="t" style="left:611.5px;top:446.5px;width:60px;text-align:right;font-size:17px;color:#dcdcdc;">8</div><div class="a" style="left:670.0px;top:386.5px;width:8.0px;height:2px;background:#e0e0e0;"></div><div class="t" style="left:611.5px;top:379.1px;width:60px;text-align:right;font-size:17px;color:#dcdcdc;">10</div><div class="a" style="left:670.0px;top:319.2px;width:8.0px;height:2px;background:#e0e0e0;"></div><div class="t" style="left:611.5px;top:311.8px;width:60px;text-align:right;font-size:17px;color:#dcdcdc;">12</div><div class="a" style="left:670.0px;top:251.8px;width:8.0px;height:2px;background:#e0e0e0;"></div><div class="t" style="left:611.5px;top:244.5px;width:60px;text-align:right;font-size:17px;color:#dcdcdc;">14</div><div class="a" style="left:678.1px;top:724.0px;width:1.5px;height:7.0px;background:#e0e0e0;"></div><div class="t" style="left:658.1px;top:729.6px;width:120px;text-align:center;font-size:17px;color:#dcdcdc;">0</div><div class="a" style="left:756.6px;top:724.0px;width:1.5px;height:7.0px;background:#e0e0e0;"></div><div class="t" style="left:736.6px;top:729.6px;width:120px;text-align:center;font-size:17px;color:#dcdcdc;">100</div><div class="a" style="left:835.1px;top:724.0px;width:1.5px;height:7.0px;background:#e0e0e0;"></div><div class="t" style="left:815.1px;top:729.6px;width:120px;text-align:center;font-size:17px;color:#dcdcdc;">20%</div><div class="a" style="left:913.6px;top:724.0px;width:1.5px;height:7.0px;background:#e0e0e0;"></div><div class="t" style="left:893.6px;top:729.6px;width:120px;text-align:center;font-size:17px;color:#dcdcdc;">40%</div><div class="a" style="left:992.1px;top:724.0px;width:1.5px;height:7.0px;background:#e0e0e0;"></div><div class="t" style="left:972.2px;top:729.6px;width:120px;text-align:center;font-size:17px;color:#dcdcdc;">60%</div><div class="a" style="left:1070.7px;top:724.0px;width:1.5px;height:7.0px;background:#e0e0e0;"></div><div class="t" style="left:1050.7px;top:729.6px;width:120px;text-align:center;font-size:17px;color:#dcdcdc;">80%</div><div class="a" style="left:1149.2px;top:724.0px;width:1.5px;height:7.0px;background:#e0e0e0;"></div><div class="t" style="left:1129.2px;top:729.6px;width:120px;text-align:center;font-size:17px;color:#dcdcdc;">100%</div><div class="a" style="left:1227.2px;top:724.0px;width:1.5px;height:7.0px;background:#e0e0e0;"></div><div class="a" style="left:1296px;top:217px;width:149px;height:508px;background:#232323;"></div><div class="a" style="left:1296.0px;top:386.5px;width:149.0px;height:2px;background:#8c8c8c;"></div><div class="a" style="left:1296.0px;top:555.5px;width:149.0px;height:2px;background:#8c8c8c;"></div><div class="a" style="left:1296.0px;top:471.8px;width:149.0px;height:2px;background:#8c8c8c;"></div><div class="a" style="left:1310px;top:471px;width:120px;height:4.6px;background:#000;"></div><div class="a" style="left:1312px;top:472px;width:116.5px;height:2px;background:#d4cc80;"></div><div class="a" style="left:1296.0px;top:302.0px;width:149.0px;height:2px;background:#e41c1c;"></div><div class="a" style="left:1296.0px;top:640.0px;width:149.0px;height:2px;background:#e41c1c;"></div><div class="a" style="left:1296.0px;top:420.6px;width:149.0px;height:1.5px;background:#e8e400;"></div><div class="a" style="left:1296.0px;top:522.0px;width:149.0px;height:1.5px;background:#e8e400;"></div><div class="a" style="left:1296.0px;top:454.5px;width:149.0px;height:1.3px;background:#0a8a0a;"></div><div class="a" style="left:1296.0px;top:488.2px;width:149.0px;height:1.3px;background:#0a8a0a;"></div><div class="a" style="left:1295px;top:216px;width:151px;height:510px;box-sizing:border-box;border:2px solid #8c8c8c;"></div><div class="t" style="left:1295.0px;top:196.7px;width:120px;text-align:center;font-size:17px;color:#dcdcdc;">Delta L</div><div class="a" style="left:1289.0px;top:217.5px;width:7.0px;height:2px;background:#e0e0e0;"></div><div class="t" style="left:1229.5px;top:210.7px;width:60px;text-align:right;font-size:17px;color:#dcdcdc;">15</div><div class="a" style="left:1289.0px;top:302.0px;width:7.0px;height:2px;background:#e0e0e0;"></div><div class="t" style="left:1229.5px;top:295.1px;width:60px;text-align:right;font-size:17px;color:#dcdcdc;">10</div><div class="a" style="left:1289.0px;top:386.5px;width:7.0px;height:2px;background:#e0e0e0;"></div><div class="t" style="left:1229.5px;top:379.6px;width:60px;text-align:right;font-size:17px;color:#dcdcdc;">5</div><div class="a" style="left:1289.0px;top:471.0px;width:7.0px;height:2px;background:#e0e0e0;"></div><div class="t" style="left:1229.5px;top:464.1px;width:60px;text-align:right;font-size:17px;color:#dcdcdc;">0</div><div class="a" style="left:1289.0px;top:555.5px;width:7.0px;height:2px;background:#e0e0e0;"></div><div class="t" style="left:1229.5px;top:548.6px;width:60px;text-align:right;font-size:17px;color:#dcdcdc;">-5</div><div class="a" style="left:1289.0px;top:640.0px;width:7.0px;height:2px;background:#e0e0e0;"></div><div class="t" style="left:1229.5px;top:633.1px;width:60px;text-align:right;font-size:17px;color:#dcdcdc;">-10</div><div class="a" style="left:1289.0px;top:724.5px;width:7.0px;height:2px;background:#e0e0e0;"></div><div class="t" style="left:1229.5px;top:717.6px;width:60px;text-align:right;font-size:17px;color:#dcdcdc;">-15</div><div class="a" style="left:1295.2px;top:724.0px;width:1.5px;height:7.0px;background:#e0e0e0;"></div><div class="a" style="left:1444.2px;top:724.0px;width:1.5px;height:7.0px;background:#e0e0e0;"></div><div class="t" style="left:1310.5px;top:729.6px;width:120px;text-align:center;font-size:17px;color:#dcdcdc;">100%</div><div class="a" style="left:1512.5px;top:217px;width:149.0px;height:508px;background:#232323;"></div><div class="a" style="left:1512.5px;top:386.5px;width:149.0px;height:2px;background:#8c8c8c;"></div><div class="a" style="left:1512.5px;top:555.5px;width:149.0px;height:2px;background:#8c8c8c;"></div><div class="a" style="left:1527px;top:426.2px;width:119px;height:46.1px;background:#000;"></div><div class="a" style="left:1529px;top:427.7px;width:115px;height:42.9px;background:linear-gradient(#d8d898,#c0c060 40%,#b8b858 60%,#5c5c30);"></div><div class="a" style="left:1512.5px;top:471.8px;width:149.0px;height:2px;background:#8c8c8c;"></div><div class="a" style="left:1512.5px;top:302.0px;width:149.0px;height:2px;background:#e41c1c;"></div><div class="a" style="left:1512.5px;top:640.0px;width:149.0px;height:2px;background:#e41c1c;"></div><div class="a" style="left:1512.5px;top:420.6px;width:149.0px;height:1.5px;background:#e8e400;"></div><div class="a" style="left:1512.5px;top:522.0px;width:149.0px;height:1.5px;background:#e8e400;"></div><div class="a" style="left:1512.5px;top:454.5px;width:149.0px;height:1.3px;background:#0a8a0a;"></div><div class="a" style="left:1512.5px;top:488.2px;width:149.0px;height:1.3px;background:#0a8a0a;"></div><div class="a" style="left:1511.5px;top:216px;width:151.0px;height:510px;box-sizing:border-box;border:2px solid #8c8c8c;"></div><div class="t" style="left:1512.0px;top:196.7px;width:120px;text-align:center;font-size:17px;color:#dcdcdc;">Delta C</div><div class="a" style="left:1505.5px;top:217.5px;width:7.0px;height:2px;background:#e0e0e0;"></div><div class="t" style="left:1446.0px;top:210.7px;width:60px;text-align:right;font-size:17px;color:#dcdcdc;">15</div><div class="a" style="left:1505.5px;top:302.0px;width:7.0px;height:2px;background:#e0e0e0;"></div><div class="t" style="left:1446.0px;top:295.1px;width:60px;text-align:right;font-size:17px;color:#dcdcdc;">10</div><div class="a" style="left:1505.5px;top:386.5px;width:7.0px;height:2px;background:#e0e0e0;"></div><div class="t" style="left:1446.0px;top:379.6px;width:60px;text-align:right;font-size:17px;color:#dcdcdc;">5</div><div class="a" style="left:1505.5px;top:471.0px;width:7.0px;height:2px;background:#e0e0e0;"></div><div class="t" style="left:1446.0px;top:464.1px;width:60px;text-align:right;font-size:17px;color:#dcdcdc;">0</div><div class="a" style="left:1505.5px;top:555.5px;width:7.0px;height:2px;background:#e0e0e0;"></div><div class="t" style="left:1446.0px;top:548.6px;width:60px;text-align:right;font-size:17px;color:#dcdcdc;">-5</div><div class="a" style="left:1505.5px;top:640.0px;width:7.0px;height:2px;background:#e0e0e0;"></div><div class="t" style="left:1446.0px;top:633.1px;width:60px;text-align:right;font-size:17px;color:#dcdcdc;">-10</div><div class="a" style="left:1505.5px;top:724.5px;width:7.0px;height:2px;background:#e0e0e0;"></div><div class="t" style="left:1446.0px;top:717.6px;width:60px;text-align:right;font-size:17px;color:#dcdcdc;">-15</div><div class="a" style="left:1511.8px;top:724.0px;width:1.5px;height:7.0px;background:#e0e0e0;"></div><div class="a" style="left:1660.8px;top:724.0px;width:1.5px;height:7.0px;background:#e0e0e0;"></div><div class="t" style="left:1527.0px;top:729.6px;width:120px;text-align:center;font-size:17px;color:#dcdcdc;">100%</div><div class="a" style="left:1729.5px;top:217px;width:149.0px;height:508px;background:#232323;"></div><div class="a" style="left:1729.5px;top:386.5px;width:149.0px;height:2px;background:#8c8c8c;"></div><div class="a" style="left:1729.5px;top:555.5px;width:149.0px;height:2px;background:#8c8c8c;"></div><div class="a" style="left:1744px;top:401.2px;width:119px;height:71.1px;background:#000;"></div><div class="a" style="left:1746px;top:402.7px;width:115px;height:67.9px;background:linear-gradient(#d8d898,#c0c060 40%,#b8b858 60%,#5c5c30);"></div><div class="a" style="left:1729.5px;top:471.8px;width:149.0px;height:2px;background:#8c8c8c;"></div><div class="a" style="left:1729.5px;top:302.0px;width:149.0px;height:2px;background:#e41c1c;"></div><div class="a" style="left:1729.5px;top:640.0px;width:149.0px;height:2px;background:#e41c1c;"></div><div class="a" style="left:1729.5px;top:420.6px;width:149.0px;height:1.5px;background:#e8e400;"></div><div class="a" style="left:1729.5px;top:522.0px;width:149.0px;height:1.5px;background:#e8e400;"></div><div class="a" style="left:1729.5px;top:454.5px;width:149.0px;height:1.3px;background:#0a8a0a;"></div><div class="a" style="left:1729.5px;top:488.2px;width:149.0px;height:1.3px;background:#0a8a0a;"></div><div class="a" style="left:1728.5px;top:216px;width:151.0px;height:510px;box-sizing:border-box;border:2px solid #8c8c8c;"></div><div class="t" style="left:1729.0px;top:196.7px;width:120px;text-align:center;font-size:17px;color:#dcdcdc;">Delta H</div><div class="a" style="left:1722.5px;top:217.5px;width:7.0px;height:2px;background:#e0e0e0;"></div><div class="t" style="left:1663.0px;top:210.7px;width:60px;text-align:right;font-size:17px;color:#dcdcdc;">15</div><div class="a" style="left:1722.5px;top:302.0px;width:7.0px;height:2px;background:#e0e0e0;"></div><div class="t" style="left:1663.0px;top:295.1px;width:60px;text-align:right;font-size:17px;color:#dcdcdc;">10</div><div class="a" style="left:1722.5px;top:386.5px;width:7.0px;height:2px;background:#e0e0e0;"></div><div class="t" style="left:1663.0px;top:379.6px;width:60px;text-align:right;font-size:17px;color:#dcdcdc;">5</div><div class="a" style="left:1722.5px;top:471.0px;width:7.0px;height:2px;background:#e0e0e0;"></div><div class="t" style="left:1663.0px;top:464.1px;width:60px;text-align:right;font-size:17px;color:#dcdcdc;">0</div><div class="a" style="left:1722.5px;top:555.5px;width:7.0px;height:2px;background:#e0e0e0;"></div><div class="t" style="left:1663.0px;top:548.6px;width:60px;text-align:right;font-size:17px;color:#dcdcdc;">-5</div><div class="a" style="left:1722.5px;top:640.0px;width:7.0px;height:2px;background:#e0e0e0;"></div><div class="t" style="left:1663.0px;top:633.1px;width:60px;text-align:right;font-size:17px;color:#dcdcdc;">-10</div><div class="a" style="left:1722.5px;top:724.5px;width:7.0px;height:2px;background:#e0e0e0;"></div><div class="t" style="left:1663.0px;top:717.6px;width:60px;text-align:right;font-size:17px;color:#dcdcdc;">-15</div><div class="a" style="left:1728.8px;top:724.0px;width:1.5px;height:7.0px;background:#e0e0e0;"></div><div class="a" style="left:1877.8px;top:724.0px;width:1.5px;height:7.0px;background:#e0e0e0;"></div><div class="t" style="left:1744.0px;top:729.6px;width:120px;text-align:center;font-size:17px;color:#dcdcdc;">100%</div><div class="a" style="left:654px;top:762px;width:1266px;height:47px;background:#333333;"></div><div class="t ro" style="left:691px;top:769.3px;">x: CIE31: 0.429</div><div class="t ro" style="left:1004px;top:769.3px;">y: CIE31: 0.547</div><div class="t ro" style="left:1312px;top:769.3px;">Y cd/m&sup2;: 902.41</div><div class="t ro" style="left:1668px;top:769.3px;">&Delta;E 2000: 2</div><div class="a" style="left:1121.5px;top:853px;width:757.0px;height:127px;background:#232323;"></div><div class="a" style="left:1121.5px;top:915.7px;width:757.0px;height:2px;background:#8c8c8c;"></div><div class="a" style="left:1197.5px;top:936.7px;width:199.3px;height:43.3px;background:#111;"></div><div class="a" style="left:1198.5px;top:937.7px;width:197.3px;height:42.3px;background:linear-gradient(#ff5656,#ee4646);"></div><div class="a" style="left:1398px;top:910.0px;width:200.3px;height:70.0px;background:#111;"></div><div class="a" style="left:1399px;top:911.0px;width:198.3px;height:69.0px;background:linear-gradient(#58ae58,#3e9e3e);"></div><div class="a" style="left:1600.5px;top:944.3px;width:198.5px;height:35.7px;background:#111;"></div><div class="a" style="left:1601.5px;top:945.3px;width:196.5px;height:34.7px;background:linear-gradient(#5a5aff,#4c4cff);"></div><div class="a" style="left:1120.5px;top:852px;width:759.0px;height:129px;box-sizing:border-box;border:2px solid #8c8c8c;"></div><div class="t" style="left:1422.0px;top:831.9px;width:120px;text-align:center;font-size:16.5px;color:#dcdcdc;">RGB Balance</div><div class="a" style="left:1115.5px;top:852.2px;width:6.0px;height:2px;background:#e0e0e0;"></div><div class="t" style="left:1056.5px;top:844.9px;width:60px;text-align:right;font-size:17px;color:#dcdcdc;">105</div><div class="a" style="left:1115.5px;top:915.7px;width:6.0px;height:2px;background:#e0e0e0;"></div><div class="t" style="left:1056.5px;top:908.4px;width:60px;text-align:right;font-size:17px;color:#dcdcdc;">100</div><div class="a" style="left:1115.5px;top:979.2px;width:6.0px;height:2px;background:#e0e0e0;"></div><div class="t" style="left:1056.5px;top:971.9px;width:60px;text-align:right;font-size:17px;color:#dcdcdc;">95</div><div class="a" style="left:1120.8px;top:980.0px;width:1.5px;height:7.0px;background:#e0e0e0;"></div><div class="a" style="left:1877.8px;top:980.0px;width:1.5px;height:7.0px;background:#e0e0e0;"></div><div class="t" style="left:1439.0px;top:983.6px;width:120px;text-align:center;font-size:17px;color:#dcdcdc;">100%</div><div class="a" style="left:0;top:1017px;width:1920px;height:63px;background:#262626;"></div><div class="a" style="left:810px;top:1017px;width:786px;height:63px;background:linear-gradient(#3c3c3c,#1e1e1e);"></div><div class="a" style="left:1px;top:1018px;width:45px;height:61px;border-radius:5px;background:linear-gradient(#a6a6a6,#8a8a8a 40%,#6a6a6a);"></div><div class="a" style="left:16px;top:1020px;width:15px;height:15px;border-radius:50%;background:linear-gradient(#6a6a6a,#9a9a9a);"></div><svg class="a" style="left:18px;top:1023px" width="11" height="7"><path d="M0.5 6.5L5.5 0.5L10.5 6.5Z" fill="#222"/></svg><div class="a" style="left:6px;top:1044px;width:35px;height:30px;border-radius:4px;background:#ffff00;box-shadow:inset 1px 1px 1px rgba(0,0,0,0.3);"></div><div class="a" style="left:51.8px;top:1018px;width:150px;height:61px;border-radius:6px;background:linear-gradient(#aaaaaa,#8e8e8e 40%,#646464);"></div><div class="a" style="left:57.5px;top:1023.5px;width:139.5px;height:35.5px;border-radius:5px;background:#c2c2b4;box-shadow:inset 1px 1px 1px rgba(0,0,0,0.25);"></div><div class="t" style="left:51.8px;top:1065px;width:150px;text-align:center;font-size:11px;font-weight:bold;color:#2a2a2a;">20%</div><div class="a" style="left:203.8px;top:1018px;width:150px;height:61px;border-radius:6px;background:linear-gradient(#aaaaaa,#8e8e8e 40%,#646464);"></div><div class="a" style="left:209.5px;top:1023.5px;width:139.5px;height:35.5px;border-radius:5px;background:#c0c4a8;box-shadow:inset 1px 1px 1px rgba(0,0,0,0.25);"></div><div class="t" style="left:203.8px;top:1065px;width:150px;text-align:center;font-size:11px;font-weight:bold;color:#2a2a2a;">40%</div><div class="a" style="left:355.8px;top:1018px;width:150px;height:61px;border-radius:6px;background:linear-gradient(#aaaaaa,#8e8e8e 40%,#646464);"></div><div class="a" style="left:361.5px;top:1023.5px;width:139.5px;height:35.5px;border-radius:5px;background:#c0c49c;box-shadow:inset 1px 1px 1px rgba(0,0,0,0.25);"></div><div class="t" style="left:355.8px;top:1065px;width:150px;text-align:center;font-size:11px;font-weight:bold;color:#2a2a2a;">60%</div><div class="a" style="left:507.8px;top:1018px;width:150px;height:61px;border-radius:6px;background:linear-gradient(#aaaaaa,#8e8e8e 40%,#646464);"></div><div class="a" style="left:513.5px;top:1023.5px;width:139.5px;height:35.5px;border-radius:5px;background:#c2c290;box-shadow:inset 1px 1px 1px rgba(0,0,0,0.25);"></div><div class="t" style="left:507.8px;top:1065px;width:150px;text-align:center;font-size:11px;font-weight:bold;color:#2a2a2a;">80%</div><div class="a" style="left:659.8px;top:1018px;width:150px;height:61px;border-radius:6px;background:linear-gradient(#1c1c1c,#1c1c1c 8%,#2e2e2e 15%,#2e2e2e);"></div><div class="a" style="left:665.5px;top:1023.5px;width:139.5px;height:35.5px;border-radius:5px;background:#bfbf5a;box-shadow:inset 1px 1px 1px rgba(0,0,0,0.25);"></div><div class="t" style="left:659.8px;top:1065px;width:150px;text-align:center;font-size:11px;font-weight:bold;color:#ffffff;">100%</div><div class="a" style="left:1597px;top:1018px;width:48px;height:19px;border-radius:5px 5px 0 0;background:linear-gradient(#bdbdbd,#8a8a8a);"></div><div class="a" style="left:1614px;top:1019.5px;width:15px;height:15px;border-radius:50%;background:linear-gradient(#7a7a7a,#b0b0b0);"></div><svg class="a" style="left:1616.5px;top:1023px" width="10" height="6"><path d="M0.5 5.5L5 0.5L9.5 5.5Z" fill="#222"/></svg><div class="a" style="left:1597px;top:1037px;width:48px;height:42px;border-radius:0 0 5px 5px;background:linear-gradient(#a8a8a8,#7a7a7a);"></div><div class="a" style="left:1605.5px;top:1042.5px;width:31px;height:30px;box-sizing:border-box;border:3px solid #2a2a2a;border-radius:5px;background:linear-gradient(#b4b4b4 50%,#8a8a8a 50%);"></div><div class="a" style="left:1613.5px;top:1051.5px;width:14.5px;height:13px;background:#0a0a0a;"></div><div class="a" style="left:1646px;top:1018px;width:45px;height:30px;border-radius:4px 4px 0 0;background:linear-gradient(#c4c4c4,#8c8c8c);"></div><svg class="a" style="left:1658.0px;top:1022px" width="22" height="22" viewBox="-11 -11 22 22"><circle r="10" fill="url(#bg1)"/><rect x="-4" y="-4" width="8" height="8" fill="#222"/></svg><div class="a" style="left:1693px;top:1018px;width:43px;height:30px;border-radius:4px 4px 0 0;background:linear-gradient(#c4c4c4,#8c8c8c);"></div><svg class="a" style="left:1704.0px;top:1022px" width="22" height="22" viewBox="-11 -11 22 22"><circle r="10" fill="url(#bg1)"/><path d="M-3 -5L5 0L-3 5Z" fill="#222"/></svg><div class="a" style="left:1738px;top:1018px;width:43px;height:30px;border-radius:4px 4px 0 0;background:linear-gradient(#c4c4c4,#8c8c8c);"></div><svg class="a" style="left:1749.0px;top:1022px" width="22" height="22" viewBox="-11 -11 22 22"><circle r="10" fill="url(#bg1)"/><path d="M-5 -5H-3M-5 -5V5H-3M5 -5H3M5 -5V5H3" stroke="#222" stroke-width="1.6" fill="none"/><path d="M-1.5 0H-0.5M0.5 0H1.5" stroke="#222" stroke-width="1.4"/></svg><div class="a" style="left:1783px;top:1018px;width:43px;height:30px;border-radius:4px 4px 0 0;background:linear-gradient(#c4c4c4,#8c8c8c);"></div><svg class="a" style="left:1794.0px;top:1022px" width="22" height="22" viewBox="-11 -11 22 22"><circle r="10" fill="url(#bg1)"/><path d="M0 0C-2 -3 -6 -3 -6 0C-6 3 -2 3 0 0C2 -3 6 -3 6 0C6 3 2 3 0 0Z" stroke="#222" stroke-width="1.5" fill="none"/></svg><div class="a" style="left:1828px;top:1018px;width:43px;height:30px;background:linear-gradient(#3c3c3c,#2a2a2a);"></div><svg class="a" style="left:1839.0px;top:1022px" width="22" height="22" viewBox="-11 -11 22 22"><circle r="10" fill="#2e2e2e"/><path d="M-5 -1A5 5 0 0 1 4 -3M5 1A5 5 0 0 1 -4 3" stroke="#1a1a1a" stroke-width="2" fill="none"/><path d="M4 -6V-2H0Z" fill="#1a1a1a"/><path d="M-4 6V2H0Z" fill="#1a1a1a"/></svg><div class="a" style="left:1873px;top:1018px;width:44px;height:30px;background:linear-gradient(#3c3c3c,#2a2a2a);"></div><svg class="a" style="left:1884.5px;top:1022px" width="22" height="22" viewBox="-11 -11 22 22"><circle r="10" fill="#2e2e2e"/><path d="M-5 0L-1 4L5 -4" stroke="#1a1a1a" stroke-width="2.2" fill="none"/></svg><svg width="0" height="0" style="position:absolute"><defs><linearGradient id="bg1" x1="0" y1="0" x2="0" y2="1"><stop offset="0" stop-color="#8a8a8a"/><stop offset="1" stop-color="#c8c8c8"/></linearGradient></defs></svg><div class="a" style="left:1646px;top:1049px;width:135px;height:30px;border-radius:4px 4px 0 0;background:linear-gradient(#cacaca,#9a9a9a 50%,#7a7a7a);"></div><div class="a" style="left:1667px;top:1054px;width:20px;height:20px;border-radius:50%;background:linear-gradient(#8e8e8e,#c4c4c4);"></div><div class="t" style="left:1667px;top:1054px;width:20px;text-align:center;font-size:17px;font-weight:bold;color:#2a2a2a;">&laquo;</div><div class="t" style="left:1689px;top:1053px;width:80px;text-align:center;font-size:21px;font-weight:bold;letter-spacing:0.2px;color:#2a2a2a;">Back</div><div class="a" style="left:1783px;top:1049px;width:134px;height:30px;border-radius:4px 4px 0 0;background:linear-gradient(#cacaca,#9a9a9a 50%,#7a7a7a);"></div><div class="a" style="left:1880px;top:1054px;width:20px;height:20px;border-radius:50%;background:linear-gradient(#8e8e8e,#c4c4c4);"></div><div class="t" style="left:1880px;top:1054px;width:20px;text-align:center;font-size:17px;font-weight:bold;color:#2a2a2a;">&raquo;</div><div class="t" style="left:1796px;top:1053px;width:80px;text-align:center;font-size:21px;font-weight:bold;letter-spacing:1.6px;color:#2a2a2a;">Next</div></body></html>
